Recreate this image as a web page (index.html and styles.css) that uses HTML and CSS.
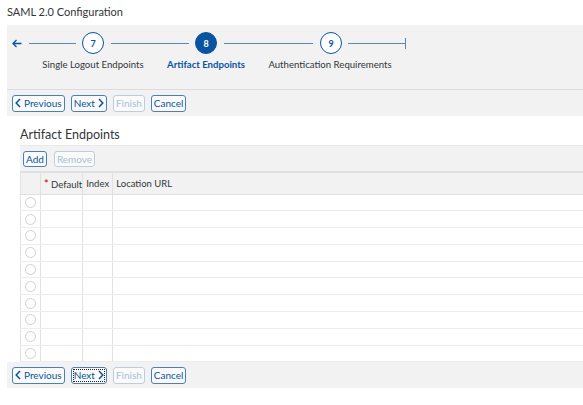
FILE: index.html
```html
<!DOCTYPE html>
<html lang="en">
<head>
  <meta charset="UTF-8">
  <title>SAML 2.0 Configuration</title>
  <link rel="stylesheet" href="styles.css">
</head>
<body>
  <div class="page-title">SAML 2.0 Configuration</div>

  <div class="wizard">
    <div class="track">
      <svg class="back" width="10" height="9" viewBox="0 0 10 9">
        <path d="M9.5 4.5H1M4.5 1L1 4.5L4.5 8" fill="none" stroke="#0854a0" stroke-width="1.3"/>
      </svg>
      <span class="line l1"></span>
      <span class="step">7</span>
      <span class="line l2"></span>
      <span class="step current">8</span>
      <span class="line l3"></span>
      <span class="step">9</span>
      <span class="line l4"></span>
      <span class="tick"></span>
    </div>
    <div class="labels">
      <span class="label lb1">Single Logout Endpoints</span>
      <span class="label lb2 active">Artifact Endpoints</span>
      <span class="label lb3">Authentication Requirements</span>
    </div>
  </div>

  <div class="button-bar">
    <button class="btn">
      <svg width="6" height="10" viewBox="0 0 6 10"><path d="M5 1L1.2 5L5 9" fill="none" stroke="#0854a0" stroke-width="1.5"/></svg>
      Previous
    </button>
    <button class="btn">
      Next
      <svg width="6" height="10" viewBox="0 0 6 10"><path d="M1 1L4.8 5L1 9" fill="none" stroke="#0854a0" stroke-width="1.5"/></svg>
    </button>
    <button class="btn disabled">Finish</button>
    <button class="btn">Cancel</button>
  </div>

  <div class="section">
    <h2 class="section-title">Artifact Endpoints</h2>
    <div class="table-toolbar">
      <button class="btn small">Add</button>
      <button class="btn small disabled">Remove</button>
    </div>
    <table class="grid">
      <thead>
        <tr>
          <th class="sel"></th>
          <th class="col-default"><span class="req">*</span> Default</th>
          <th class="col-index">Index</th>
          <th>Location URL</th>
        </tr>
      </thead>
      <tbody id="rows"></tbody>
    </table>
  </div>

  <div class="button-bar">
    <button class="btn">
      <svg width="6" height="10" viewBox="0 0 6 10"><path d="M5 1L1.2 5L5 9" fill="none" stroke="#0854a0" stroke-width="1.5"/></svg>
      Previous
    </button>
    <button class="btn focused">
      Next
      <svg width="6" height="10" viewBox="0 0 6 10"><path d="M1 1L4.8 5L1 9" fill="none" stroke="#0854a0" stroke-width="1.5"/></svg>
    </button>
    <button class="btn disabled">Finish</button>
    <button class="btn">Cancel</button>
  </div>

  <script>
    const rowsRef = document.querySelector('#rows')
    for (let i = 0; i < 10; i++) {
      rowsRef.innerHTML += '<tr><td class="sel"><span class="radio"></span></td><td></td><td></td><td></td></tr>'
    }
  </script>
</body>
</html>
```

FILE: styles.css
```css
* {
  box-sizing: border-box;
  padding: 0;
  margin: 0;
}

body {
  font-family: Lato, 'Noto Sans', sans-serif;
  color: #32363a;
  background-color: white;
  width: 583px;
  overflow: hidden;
}

.page-title {
  height: 25px;
  padding: 5px 7px 0;
  font-size: 11px;
}

/* wizard */

.wizard {
  margin-left: 7px;
  height: 65px;
  background-color: #f2f2f2;
  border-bottom: 1px solid #dcdcdc;
  padding-top: 7px;
}

.track {
  display: flex;
  align-items: center;
  height: 22px;
  padding-left: 5px;
}

.back {
  display: block;
}

.line {
  height: 1px;
  background-color: #5e86b3;
}

.l1 { width: 47px; margin: 0 6px 0 7px; }
.l2 { width: 78px; margin: 0 6px 0 7px; }
.l3 { width: 89px; margin: 0 7px 0 7px; }
.l4 { width: 57px; margin-left: 6px; }

.step {
  width: 22px;
  height: 22px;
  border-radius: 50%;
  border: 1px solid #0854a0;
  background-color: white;
  color: #0854a0;
  font-size: 9px;
  font-weight: bold;
  display: flex;
  align-items: center;
  justify-content: center;
}

.step.current {
  background-color: #0854a0;
  color: white;
}

.tick {
  width: 1px;
  height: 11px;
  background-color: #5e86b3;
}

.labels {
  display: flex;
  margin-top: 5px;
  font-size: 9.6px;
}

.label {
  text-align: center;
  white-space: nowrap;
}

.lb1 { width: 116px; margin-left: 28px; }
.lb2 { width: 110px; }
.lb3 { width: 138px; }

.label.active {
  color: #0854a0;
  font-weight: bold;
}

/* buttons */

.button-bar {
  margin-left: 7px;
  height: 26px;
  background-color: #f2f2f2;
  display: flex;
  align-items: center;
  gap: 6px;
  padding-left: 5px;
}

.btn {
  height: 17px;
  padding: 0 2px;
  font-family: inherit;
  font-size: 10px;
  color: #0854a0;
  background-color: #fafafa;
  border: 1px solid #4c7fb8;
  border-radius: 3px;
  display: flex;
  align-items: center;
  gap: 3px;
}

.btn svg {
  flex-shrink: 0;
}

.btn.disabled {
  color: #a9bfd8;
  border-color: #bccde0;
}

.btn.focused {
  outline: 1px dotted #222;
  outline-offset: -3px;
}

/* table */

.section {
  margin-left: 20px;
}

.section-title {
  font-size: 12.5px;
  font-weight: normal;
  height: 29px;
  padding-top: 11px;
}

.table-toolbar {
  height: 28px;
  background-color: #f2f2f2;
  border-top: 1px solid #e8e8e8;
  border-bottom: 2px solid #e0e0e0;
  display: flex;
  align-items: center;
  gap: 7px;
  padding-left: 3px;
}

.btn.small {
  height: 16px;
}

.grid {
  width: 100%;
  border-collapse: collapse;
  font-size: 9.5px;
}

.grid th {
  height: 21px;
  background-color: #f2f2f2;
  font-weight: normal;
  text-align: left;
  padding-left: 3px;
  border-left: 1px solid #e2e2e2;
  border-bottom: 1px solid #e0e0e0;
  white-space: nowrap;
}

.grid td {
  height: 16.8px;
  border-left: 1px solid #e2e2e2;
  border-bottom: 1px solid #ececec;
}

.grid .sel {
  width: 20px;
  padding: 0;
}

.col-default { width: 42px; }
.col-index { width: 30px; }

.req {
  color: #bb0000;
  font-size: 11px;
}

.radio {
  display: block;
  width: 11px;
  height: 11px;
  margin-left: 4px;
  border-radius: 50%;
  border: 1px solid #d0d0d0;
  background-color: white;
}
```
